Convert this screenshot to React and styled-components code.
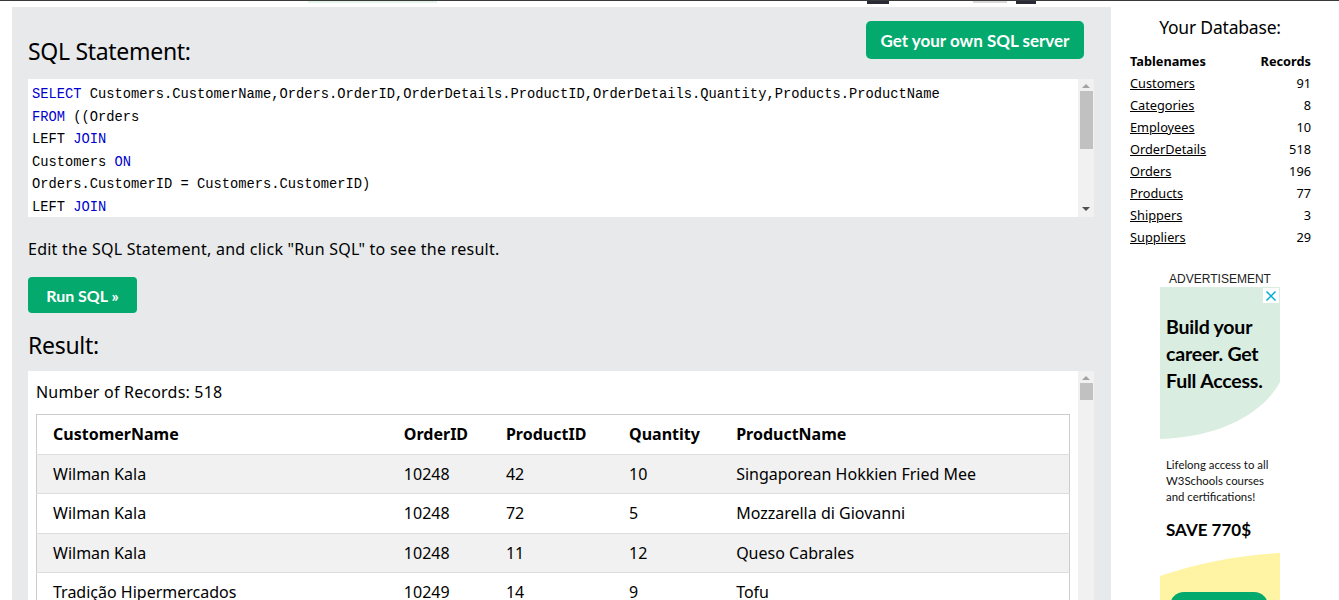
import React from "react";
import styled, { createGlobalStyle } from "styled-components";

const Global = createGlobalStyle`
  html, body { margin: 0; padding: 0; background: #fff; overflow: hidden; }
  body { font-family: "Noto Sans", "Open Sans", sans-serif; color: #000; }
  * { box-sizing: border-box; }
`;

const Page = styled.div`
  width: 1339px;
  height: 600px;
  overflow: hidden;
`;

const TopStrip = styled.div`
  display: flex;
  align-items: flex-start;
  height: 4px;
  border-top: 1px solid #38393b;
`;

const StripItem = styled.span`
  display: block;
  margin-left: ${(p) => p.$ml}px;
  width: ${(p) => p.$w}px;
  height: ${(p) => p.$h}px;
  background: ${(p) => p.$bg};
`;

const Main = styled.div`
  display: flex;
  align-items: flex-start;
  margin-top: 3px;
  padding-left: 12px;
`;

const Panel = styled.section`
  width: 1099px;
  height: 620px;
  background: #e7e9eb;
  padding: 14px 17px 0 16px;
`;

const HeadRow = styled.div`
  display: flex;
  justify-content: space-between;
  align-items: flex-start;
`;

const Heading = styled.h2`
  margin: ${(p) => p.$mt}px 0 0 0;
  font-family: "Noto Sans", sans-serif;
  font-weight: 400;
  font-size: 23px;
  line-height: 29px;
  letter-spacing: -0.3px;
  color: #000;
`;

const GreenButton = styled.button`
  border: none;
  background: #04aa6d;
  color: #fff;
  font-family: "Lato", "Noto Sans", sans-serif;
  font-weight: 700;
  font-size: ${(p) => p.$fs}px;
  height: ${(p) => p.$h}px;
  width: ${(p) => p.$w}px;
  border-radius: ${(p) => p.$r}px;
  padding: 0;
  margin-top: ${(p) => p.$mt || 0}px;
  margin-right: ${(p) => p.$mr || 0}px;
`;

const Box = styled.div`
  display: flex;
  background: #fff;
  height: ${(p) => p.$h}px;
  margin-top: ${(p) => p.$mt}px;
`;

const BoxContent = styled.div`
  flex: 1;
  overflow: hidden;
  padding: ${(p) => p.$pad};
`;

const Track = styled.div`
  width: 16px;
  background: #f1f1f1;
  display: flex;
  flex-direction: column;
  align-items: center;
`;

const Arrow = styled.div`
  width: 0;
  height: 0;
  border-left: 4px solid transparent;
  border-right: 4px solid transparent;
  ${(p) =>
    p.$down
      ? "border-top: 4px solid #505050; margin-top: auto; margin-bottom: 6px;"
      : "border-bottom: 4px solid #a3a3a3; margin-top: 5px;"}
`;

const Thumb = styled.div`
  width: 13px;
  height: ${(p) => p.$h}px;
  margin-top: 3px;
  background: #c1c1c1;
`;

const CodeLine = styled.div`
  font-family: "Liberation Mono", "DejaVu Sans Mono", monospace;
  font-size: 13.75px;
  line-height: 22.6px;
  white-space: pre;
  color: #000;
`;

const Kw = styled.span`
  color: #0000cd;
`;

const Note = styled.p`
  margin: 21px 0 0 0;
  font-size: 16px;
  line-height: 23px;
  letter-spacing: 0.25px;
`;

const RunRow = styled.div`
  margin-top: 16px;
`;

const Count = styled.div`
  font-size: 16px;
  line-height: 23px;
  letter-spacing: 0.2px;
  margin-top: 10px;
`;

const Table = styled.table`
  margin-top: 10px;
  width: 1034px;
  border-collapse: collapse;
  border: 1px solid #ccc;
  table-layout: fixed;
  font-size: 16px;
`;

const Th = styled.th`
  text-align: left;
  font-weight: 700;
  padding: 8px 0 8px 16px;
  line-height: 22.5px;
  border-bottom: 1px solid #ddd;
`;

const Tr = styled.tr`
  background: ${(p) => (p.$alt ? "#f1f1f1" : "#fff")};
  border-bottom: 1px solid #ddd;
`;

const Td = styled.td`
  padding: 8px 0 8px 16px;
  line-height: 22.5px;
  white-space: nowrap;
`;

const Sidebar = styled.aside`
  width: 228px;
  padding-right: 10px;
  display: flex;
  flex-direction: column;
  align-items: center;
`;

const DbTitle = styled.div`
  font-size: 17.5px;
  line-height: 24px;
  margin-top: 8px;
  letter-spacing: -0.2px;
`;

const DbTable = styled.table`
  width: 181px;
  border-collapse: collapse;
  margin: 11px 0 0 1px;
  font-size: 12.75px;
`;

const DbTh = styled.th`
  font-weight: 700;
  text-align: ${(p) => p.$align || "left"};
  padding: 0;
  height: 22px;
`;

const DbTd = styled.td`
  text-align: ${(p) => p.$align || "left"};
  padding: 0;
  height: 22px;
`;

const DbLink = styled.a`
  color: #000;
  text-decoration: underline;
`;

const AdLabel = styled.div`
  margin-top: 24px;
  font-family: "Liberation Sans", sans-serif;
  font-size: 12px;
  line-height: 15px;
  color: #222;
`;

const Ad = styled.div`
  position: relative;
  width: 120px;
  height: 320px;
  padding: 26px 0 0 6px;
  font-family: "Lato", "Noto Sans", sans-serif;
  color: #000;
`;

const AdArt = styled.svg`
  position: absolute;
  left: 0;
  top: 0;
  z-index: 0;
`;

const AdClose = styled.div`
  position: absolute;
  right: 1px;
  top: 1px;
  width: 16px;
  height: 15px;
  background: #fff;
  display: flex;
  align-items: center;
  justify-content: center;
  z-index: 2;
`;

const AdHead = styled.div`
  position: relative;
  z-index: 1;
  font-weight: 700;
  font-size: 19.5px;
  line-height: 27px;
  letter-spacing: -0.2px;
`;

const AdText = styled.div`
  position: relative;
  z-index: 1;
  margin-top: 63px;
  font-size: 11.4px;
  line-height: 16px;
  color: #111;
`;

const AdSave = styled.div`
  position: relative;
  z-index: 1;
  margin-top: 14px;
  font-weight: 700;
  font-size: 17px;
  line-height: 22px;
`;

const sqlLines = [
  [
    <Kw key="a">SELECT</Kw>,
    " Customers.CustomerName,Orders.OrderID,OrderDetails.ProductID,OrderDetails.Quantity,Products.ProductName",
  ],
  [<Kw key="a">FROM</Kw>, " ((Orders"],
  ["LEFT ", <Kw key="a">JOIN</Kw>],
  ["Customers ", <Kw key="a">ON</Kw>],
  ["Orders.CustomerID = Customers.CustomerID)"],
  ["LEFT ", <Kw key="a">JOIN</Kw>],
];

const rows = [
  ["Wilman Kala", "10248", "42", "10", "Singaporean Hokkien Fried Mee"],
  ["Wilman Kala", "10248", "72", "5", "Mozzarella di Giovanni"],
  ["Wilman Kala", "10248", "11", "12", "Queso Cabrales"],
  ["Tradição Hipermercados", "10249", "14", "9", "Tofu"],
];

const tables = [
  ["Customers", 91],
  ["Categories", 8],
  ["Employees", 10],
  ["OrderDetails", 518],
  ["Orders", 196],
  ["Products", 77],
  ["Shippers", 3],
  ["Suppliers", 29],
];

const colWidths = [351, 102, 123, 107, 349];

export default function App() {
  return (
    <Page>
      <Global />
      <TopStrip>
        <StripItem $ml={308} $w={129} $h={2} $bg="#e5f4e8" />
        <StripItem $ml={430} $w={22} $h={3} $bg="#282a35" />
        <StripItem $ml={84} $w={34} $h={2} $bg="#d8d8d8" />
        <StripItem $ml={9} $w={20} $h={3} $bg="#282a35" />
      </TopStrip>
      <Main>
        <Panel>
          <HeadRow>
            <Heading $mt={16}>SQL Statement:</Heading>
            <GreenButton $fs={17} $h={38} $w={218} $r={5} $mr={10}>
              Get your own SQL server
            </GreenButton>
          </HeadRow>
          <Box $h={138} $mt={13}>
            <BoxContent $pad="5px 4px 0 4px">
              {sqlLines.map((l, i) => (
                <CodeLine key={i}>{l}</CodeLine>
              ))}
            </BoxContent>
            <Track>
              <Arrow />
              <Thumb $h={58} />
              <Arrow $down />
            </Track>
          </Box>
          <Note>Edit the SQL Statement, and click "Run SQL" to see the result.</Note>
          <RunRow>
            <GreenButton $fs={16} $h={36} $w={109} $r={4}>
              Run SQL »
            </GreenButton>
          </RunRow>
          <Heading $mt={18}>Result:</Heading>
          <Box $h={300} $mt={11}>
            <BoxContent $pad="0 0 0 8px">
              <Count>Number of Records: 518</Count>
              <Table>
                <colgroup>
                  {colWidths.map((w, i) => (
                    <col key={i} style={{ width: w }} />
                  ))}
                </colgroup>
                <thead>
                  <tr>
                    <Th>CustomerName</Th>
                    <Th>OrderID</Th>
                    <Th>ProductID</Th>
                    <Th>Quantity</Th>
                    <Th>ProductName</Th>
                  </tr>
                </thead>
                <tbody>
                  {rows.map((r, i) => (
                    <Tr key={i} $alt={i % 2 === 0}>
                      {r.map((c, j) => (
                        <Td key={j}>{c}</Td>
                      ))}
                    </Tr>
                  ))}
                </tbody>
              </Table>
            </BoxContent>
            <Track>
              <Arrow />
              <Thumb $h={17} />
            </Track>
          </Box>
        </Panel>
        <Sidebar>
          <DbTitle>Your Database:</DbTitle>
          <DbTable>
            <thead>
              <tr>
                <DbTh>Tablenames</DbTh>
                <DbTh $align="right">Records</DbTh>
              </tr>
            </thead>
            <tbody>
              {tables.map(([n, c]) => (
                <tr key={n}>
                  <DbTd>
                    <DbLink href="#">{n}</DbLink>
                  </DbTd>
                  <DbTd $align="right">{c}</DbTd>
                </tr>
              ))}
            </tbody>
          </DbTable>
          <AdLabel>ADVERTISEMENT</AdLabel>
          <Ad>
            <AdArt width="120" height="320" viewBox="0 0 120 320">
              <path d="M0 0 H120 V95 C104 125 62 150 0 152 Z" fill="#d9ede0" />
              <path d="M0 289 C38 276 80 268 120 266 V320 H0 Z" fill="#fff4a3" />
              <rect x="10" y="305" width="98" height="40" rx="14" fill="#04aa6d" />
            </AdArt>
            <AdClose>
              <svg width="12" height="12" viewBox="0 0 12 12">
                <path d="M1.5 1.5 L10.5 10.5 M10.5 1.5 L1.5 10.5" stroke="#00aecd" strokeWidth="1.5" />
              </svg>
            </AdClose>
            <AdHead>
              Build your
              <br />
              career. Get
              <br />
              Full Access.
            </AdHead>
            <AdText>
              Lifelong access to all
              <br />
              W3Schools courses
              <br />
              and certifications!
            </AdText>
            <AdSave>SAVE 770$</AdSave>
          </Ad>
        </Sidebar>
      </Main>
    </Page>
  );
}
